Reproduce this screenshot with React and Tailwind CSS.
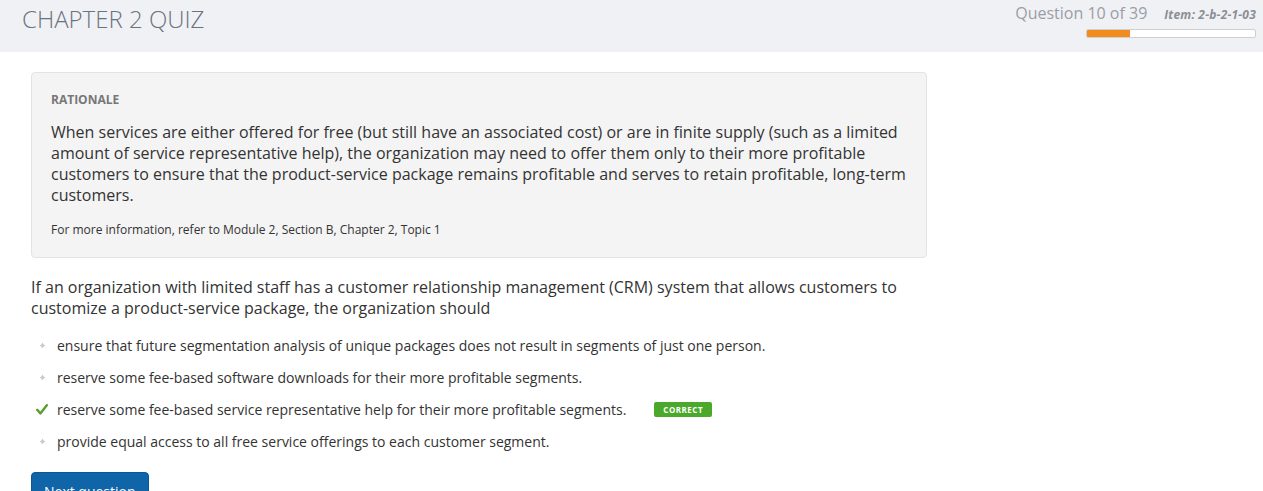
import React from 'react';

const options = [
    { text: 'ensure that future segmentation analysis of unique packages does not result in segments of just one person.', correct: false },
    { text: 'reserve some fee-based software downloads for their more profitable segments.', correct: false },
    { text: 'reserve some fee-based service representative help for their more profitable segments.', correct: true },
    { text: 'provide equal access to all free service offerings to each customer segment.', correct: false }
];

const Bullet = () => (
    <svg width="7" height="7" viewBox="0 0 8 8" className="text-[#c8c8c8]">
        <path d="M4 0.5 L5.2 2.8 L7.5 4 L5.2 5.2 L4 7.5 L2.8 5.2 L0.5 4 L2.8 2.8 Z" fill="currentColor" />
    </svg>
);

const Check = () => (
    <svg width="12" height="11" viewBox="0 0 12 11">
        <path d="M1.2 5.8 L4.4 9.4 L10.8 1.2" fill="none" stroke="#5a9e2f" strokeWidth="2.4" strokeLinecap="round" strokeLinejoin="round" />
    </svg>
);

const App = () => {
    const current = 10;
    const total = 39;

    return (
        <div className="min-h-[491px] bg-white font-['Open_Sans',sans-serif] text-[#333]">
            {/* Header */}
            <div className="h-[52px] bg-[#f0f1f4] flex justify-between items-start">
                <h1 className="pl-[22px] pt-[2px] text-[24px] font-light text-[#6b7280] leading-[34px]">CHAPTER 2 QUIZ</h1>
                <div className="pr-[7px] pt-[2px] flex flex-col items-end">
                    <div className="flex items-baseline gap-[17px]">
                        <span className="text-[16px] text-[#9a9ea6] leading-[22px]">Question {current} of {total}</span>
                        <span className="text-[12px] font-bold italic tracking-[0.2px] text-[#8a8e95]">Item: 2-b-2-1-03</span>
                    </div>
                    <div className="mt-[5px] w-[170px] h-[9px] bg-white border border-[#cfcfcf] rounded-[2px] overflow-hidden">
                        <div className="h-full bg-[#f28c1e]" style={{ width: `${(current / total) * 100}%` }} />
                    </div>
                </div>
            </div>

            <div className="pl-[31px] pt-[20px] w-[927px]">
                {/* Rationale */}
                <div className="bg-[#f4f4f4] border border-[#e3e3e3] rounded-[4px] px-[19px] pt-[18px] pb-[18px]">
                    <div className="text-[12px] font-bold text-[#777] leading-[18px]">RATIONALE</div>
                    <p className="mt-[13px] text-[16px] leading-[21px] text-[#333]">
                        When services are either offered for free (but still have an associated cost) or are in finite supply (such as a limited amount of service representative help), the organization may need to offer them only to their more profitable customers to ensure that the product-service package remains profitable and serves to retain profitable, long-term customers.
                    </p>
                    <p className="mt-[15px] text-[12px] leading-[18px] text-[#333]">For more information, refer to Module 2, Section B, Chapter 2, Topic 1</p>
                </div>

                {/* Question */}
                <p className="mt-[19px] text-[16px] leading-[21px] text-[#333] pr-[20px]">
                    If an organization with limited staff has a customer relationship management (CRM) system that allows customers to customize a product-service package, the organization should
                </p>

                <ul className="mt-[16px] flex flex-col gap-[12px]">
                    {options.map((o, i) => (
                        <li key={i} className="flex items-center h-[20px] text-[14px] text-[#333]">
                            <span className="w-[26px] flex justify-center pr-[4px]">
                                {o.correct ? <Check /> : <Bullet />}
                            </span>
                            <span>{o.text}</span>
                            {o.correct && (
                                <span className="ml-[28px] bg-[#4aa82a] text-white text-[8px] font-bold tracking-[0.5px] rounded-[2px] px-[9px] h-[15px] leading-[15px]">CORRECT</span>
                            )}
                        </li>
                    ))}
                </ul>

                <button className="mt-[21px] bg-[#1064a8] text-white text-[14px] px-[12px] h-[38px] rounded-[4px] border border-[#0b5796]">Next question</button>
            </div>
        </div>
    );
};

export default App;
